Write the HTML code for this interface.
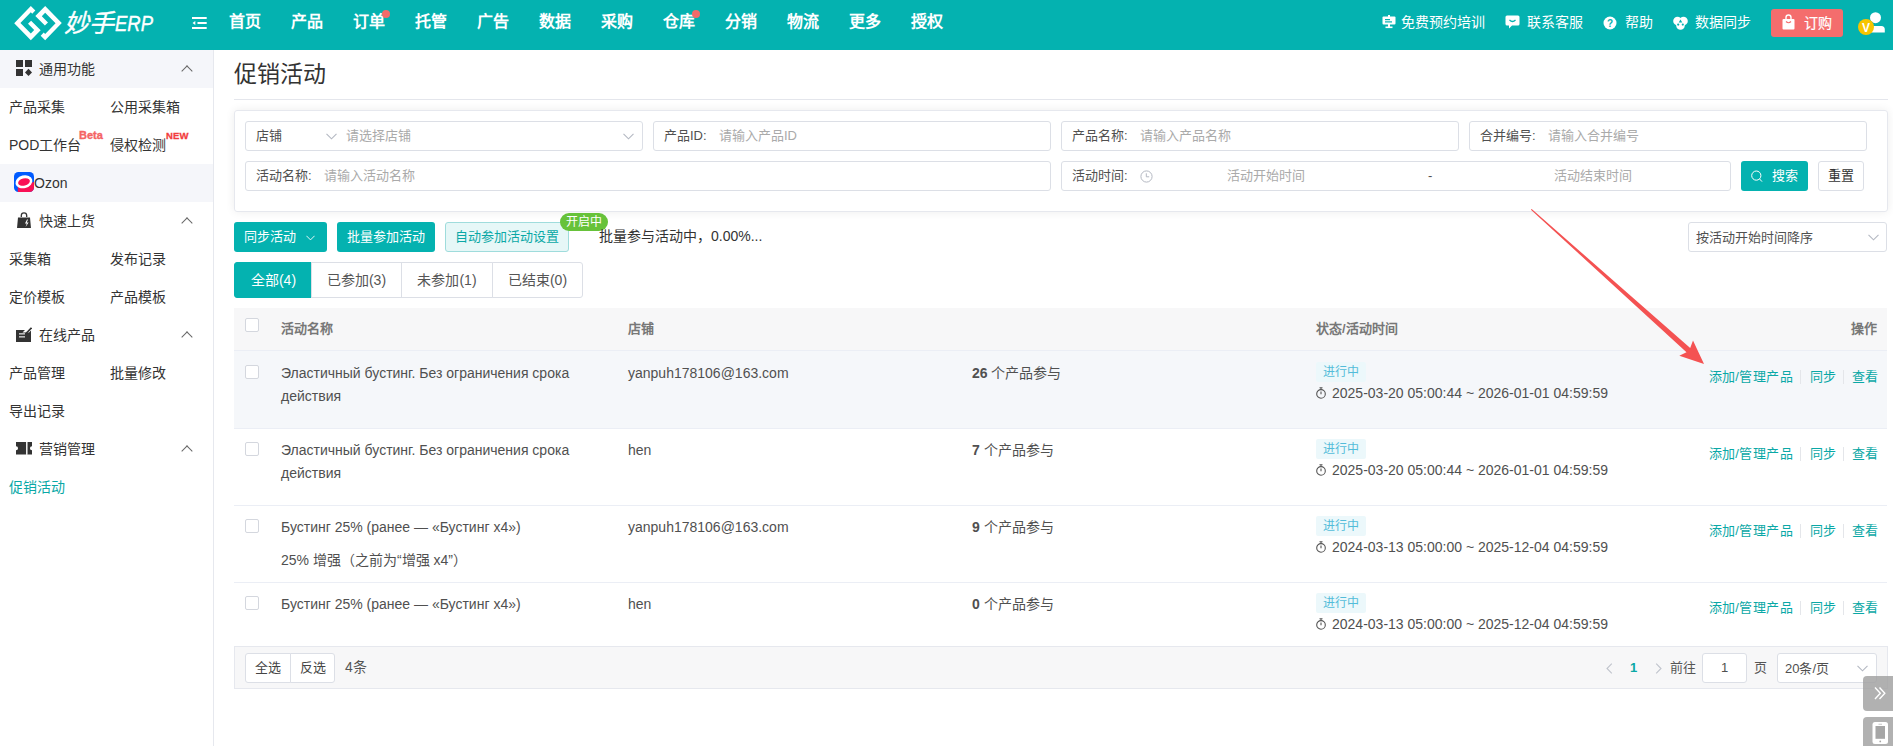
<!DOCTYPE html>
<html lang="zh-CN">
<head>
<meta charset="utf-8">
<style>
*{box-sizing:border-box;margin:0;padding:0}
html,body{width:1893px;height:746px;overflow:hidden;background:#fff;font-family:"Liberation Sans",sans-serif;color:#333;font-size:14px}
.abs{position:absolute}
#hdr{position:absolute;left:0;top:0;width:1893px;height:50px;background:#04b2b0}
.nav{position:absolute;top:11px;font-size:16px;font-weight:700;color:#fff;line-height:22px}
.dot{position:absolute;width:8px;height:8px;border-radius:50%;background:#f46a6a}
.hr{position:absolute;top:13px;font-size:14px;color:#fff;line-height:18px}
#side{position:absolute;left:0;top:50px;width:214px;height:696px;background:#fff;border-right:1px solid #e6e8ee}
.sh{position:absolute;left:0;width:213px;height:38px}
.sh .t{position:absolute;left:39px;top:10px;font-size:14px;color:#333;line-height:18px}
.sh .car{position:absolute;left:183px;top:17px;width:8px;height:8px;border-left:1.3px solid #666;border-top:1.3px solid #666;transform:rotate(45deg)}
.si{position:absolute;font-size:14px;color:#333;line-height:18px;margin-top:1px}
.inp{position:absolute;height:30px;border:1px solid #dcdfe6;border-radius:3px;background:#fff}
.inp .l{position:absolute;left:10px;top:6px;font-size:13px;color:#505050;line-height:16px}
.inp .p{position:absolute;top:6px;font-size:13px;color:#aaa;line-height:16px}
.btn{position:absolute;height:30px;border-radius:3px;font-size:13px;line-height:30px;text-align:center}
.tab{position:absolute;top:262px;height:36px;border:1px solid #dcdfe6;font-size:14px;line-height:34px;text-align:center;color:#555;background:#fff}
.th{position:absolute;top:321px;font-size:13px;font-weight:700;color:#777;line-height:16px}
.cb{position:absolute;width:14px;height:14px;border:1px solid #d4d7de;border-radius:2px;background:#fff}
.row{position:absolute;left:234px;width:1653px;border-bottom:1px solid #ebeef5}
.td{position:absolute;font-size:14px;color:#505050;line-height:23px;margin-top:1px}
.tag{position:absolute;height:20px;width:50px;text-align:center;margin-top:1px;background:#ecf8fb;color:#53bcd9;font-size:12px;line-height:20px;border-radius:2px}
.ops{position:absolute;font-size:13px;color:#0aa8a6;line-height:16px;white-space:nowrap}
.sep{position:absolute;width:1px;height:14px;background:#e4e6ea}
</style>
</head>
<body>
<!-- HEADER -->
<div id="hdr">
  <svg class="abs" style="left:10px;top:3px" width="56" height="42" viewBox="0 0 995 746"><g fill="#fff"><polygon points="370,55 450,135 395,190 370,165 185,355 370,540 430,480 320,370 375,315 545,485 370,660 75,360"/><polygon points="625,660 545,580 600,525 625,550 810,360 625,175 565,235 675,345 620,400 450,230 625,55 920,355"/></g></svg>
  <div class="abs" style="left:64px;top:9px;font-size:25px;font-style:italic;color:#fff;line-height:28px;letter-spacing:-0.5px;-webkit-text-stroke:0.4px #fff">妙手</div><div class="abs" style="left:115px;top:11px;font-size:22.5px;font-style:italic;color:#fff;line-height:26px;transform:scaleX(0.82);transform-origin:0 0;-webkit-text-stroke:0.4px #fff">ERP</div>
  <svg class="abs" style="left:191.5px;top:17px" width="15" height="12" viewBox="0 0 15 12"><g fill="#fff"><rect x="0" y="0" width="14.7" height="2"/><rect x="5.5" y="5" width="9.2" height="2"/><rect x="0" y="10" width="14.7" height="2"/><path d="M0.5 6 L3.3 4.1 L3.3 7.9 Z"/></g></svg>
  <div class="nav" style="left:229px">首页</div>
  <div class="nav" style="left:291px">产品</div>
  <div class="nav" style="left:353px">订单</div><div class="dot" style="left:382px;top:9.5px"></div>
  <div class="nav" style="left:415px">托管</div>
  <div class="nav" style="left:477px">广告</div>
  <div class="nav" style="left:539px">数据</div>
  <div class="nav" style="left:601px">采购</div>
  <div class="nav" style="left:663px">仓库</div><div class="dot" style="left:692px;top:9.5px"></div>
  <div class="nav" style="left:725px">分销</div>
  <div class="nav" style="left:787px">物流</div>
  <div class="nav" style="left:849px">更多</div>
  <div class="nav" style="left:911px">授权</div>

  <svg class="abs" style="left:1382px;top:15px" width="14" height="14" viewBox="0 0 14 14"><g fill="#fff"><rect x="0.5" y="1.5" width="13" height="8" rx="1"/><rect x="6" y="0" width="2" height="2"/><rect x="6" y="9" width="2" height="3"/><rect x="3.5" y="11.5" width="7" height="1.6"/></g><rect x="3" y="4" width="5" height="1.2" fill="#04b2b0"/><rect x="3" y="6.3" width="7" height="1.2" fill="#04b2b0"/></svg>
  <div class="hr" style="left:1401px">免费预约培训</div>
  <svg class="abs" style="left:1504px;top:15px" width="16" height="14" viewBox="0 0 16 14"><path d="M3 0.5 H14 A1.5 1.5 0 0 1 15.5 2 V9 A1.5 1.5 0 0 1 14 10.5 H8 L5 13.5 V10.5 H3 A1.5 1.5 0 0 1 1.5 9 V2 A1.5 1.5 0 0 1 3 0.5Z" fill="#fff"/><path d="M5.5 5 Q8.5 8 11.5 5" stroke="#04b2b0" stroke-width="1.2" fill="none"/></svg>
  <div class="hr" style="left:1527px">联系客服</div>
  <svg class="abs" style="left:1603px;top:16px" width="14" height="14" viewBox="0 0 14 14"><circle cx="7" cy="7" r="6.5" fill="#fff"/><text x="7" y="11" text-anchor="middle" font-size="10" font-weight="700" fill="#04b2b0" font-family="Liberation Sans">?</text></svg>
  <div class="hr" style="left:1625px">帮助</div>
  <svg class="abs" style="left:1673px;top:16px" width="15" height="14" viewBox="0 0 15 14"><g fill="#fff"><circle cx="4.5" cy="5" r="4.3"/><circle cx="10.5" cy="5" r="4.3"/><circle cx="7.5" cy="9.5" r="4.3"/></g><g fill="#04b2b0"><path d="M7.5 3.5 L9.3 6.6 H5.7Z"/><circle cx="5.2" cy="8.6" r="1.1"/><circle cx="9.8" cy="8.6" r="1.1"/></g></svg>
  <div class="hr" style="left:1695px">数据同步</div>
  <div class="abs" style="left:1771px;top:9px;width:72px;height:28px;background:#f46d6d;border-radius:3px"></div>
  <svg class="abs" style="left:1782px;top:14px" width="13" height="16" viewBox="0 0 13 16"><path d="M4 5 V3.5 A2.5 2.5 0 0 1 9 3.5 V5" stroke="#fff" stroke-width="1.4" fill="none"/><rect x="0.5" y="5" width="12" height="10.5" rx="1" fill="#fff"/><path d="M4 7.5 Q6.5 10 9 7.5" stroke="#f46d6d" stroke-width="1.1" fill="none"/></svg>
  <div class="hr" style="left:1804px;top:14px;font-size:14px;-webkit-text-stroke:0.2px #fff">订购</div>
  <svg class="abs" style="left:1857px;top:11px" width="30" height="30" viewBox="0 0 30 30"><circle cx="18.5" cy="6.7" r="5.5" fill="#fff"/><path d="M12.8 21.5 V18.5 A3.5 3.5 0 0 1 16.3 15 H24.3 A3.5 3.5 0 0 1 27.8 18.5 V21.5Z" fill="#fff"/><circle cx="9" cy="16" r="8" fill="#f7c500"/><text x="9" y="20.5" text-anchor="middle" font-size="12" font-weight="700" fill="#fff" font-family="Liberation Sans">V</text></svg>
</div>

<!-- SIDEBAR -->
<div id="side"></div>
<div class="sh" style="top:50px;background:#f5f6fa"><div class="t">通用功能</div><div class="car"></div>
<svg class="abs" style="left:16px;top:10px" width="16" height="16" viewBox="0 0 16 16"><g fill="#333"><rect x="0" y="0" width="7" height="7"/><rect x="9" y="0" width="7" height="7"/><rect x="0" y="9" width="7" height="7"/><path d="M12.5 8.8 L16 12.5 L12.5 16 L9 12.5Z"/></g></svg></div>
<div class="si" style="left:9px;top:97px">产品采集</div>
<div class="si" style="left:110px;top:97px">公用采集箱</div>
<div class="si" style="left:9px;top:135px">POD工作台</div>
<div class="abs" style="left:79px;font-size:11px;font-weight:700;color:#f46464;line-height:12px;-webkit-text-stroke:0.35px #f46464;top:129px">Beta</div>
<div class="si" style="left:110px;top:135px">侵权检测</div>
<div class="abs" style="left:166px;top:131px;font-size:9.5px;font-weight:700;color:#f23d3d;line-height:10px;letter-spacing:0.2px;-webkit-text-stroke:0.3px #f23d3d">NEW</div>
<div class="sh" style="top:164px;background:#f5f6fa"><div class="t" style="left:34px">Ozon</div>
<svg class="abs" style="left:14px;top:8px" width="20" height="20" viewBox="0 0 20 20"><defs><clipPath id="oc"><rect x="0" y="0" width="20" height="20" rx="4.5"/></clipPath></defs><g clip-path="url(#oc)"><rect width="20" height="20" fill="#005bff"/><path d="M3.8 20 V14 L20 10 V20Z" fill="#f91155"/><ellipse cx="9.9" cy="9.8" rx="8.6" ry="6.4" transform="rotate(-14 9.9 9.8)" fill="#fff"/><ellipse cx="10" cy="10" rx="6" ry="3.6" transform="rotate(-14 10 10)" fill="#f91155"/></g></svg></div>
<div class="sh" style="top:202px"><div class="t">快速上货</div><div class="car"></div>
<svg class="abs" style="left:16px;top:9px" width="16" height="18" viewBox="0 0 16 18"><path d="M5.3 6 V4.5 A2.7 2.7 0 0 1 10.7 4.5 V6" stroke="#333" stroke-width="1.3" fill="none"/><path d="M2 6.5 H14 L15 17 H1Z" fill="#333"/><path d="M11 8.5 L9 12.5 H10.8 L9.6 16 L12.6 11.6 H10.8 L12 8.5Z" fill="#fff"/></svg></div>
<div class="si" style="left:9px;top:249px">采集箱</div>
<div class="si" style="left:110px;top:249px">发布记录</div>
<div class="si" style="left:9px;top:287px">定价模板</div>
<div class="si" style="left:110px;top:287px">产品模板</div>
<div class="sh" style="top:316px"><div class="t">在线产品</div><div class="car"></div>
<svg class="abs" style="left:16px;top:10px" width="16" height="17" viewBox="0 0 16 17"><path d="M0 4 H9 L6.5 6.5 L13 6.5 L15 4.5 V16 H0Z" fill="#333"/><rect x="3" y="7.2" width="6" height="1.3" fill="#ddd"/><rect x="3" y="10.2" width="6" height="1.3" fill="#ddd"/><path d="M9.5 8 L15.5 1.8" stroke="#333" stroke-width="1.7"/></svg></div>
<div class="si" style="left:9px;top:363px">产品管理</div>
<div class="si" style="left:110px;top:363px">批量修改</div>
<div class="si" style="left:9px;top:401px">导出记录</div>
<div class="sh" style="top:430px"><div class="t">营销管理</div><div class="car"></div>
<svg class="abs" style="left:16px;top:12px" width="16" height="13" viewBox="0 0 16 13"><path d="M0 0 H10.3 V12.5 H0 V8.3 A2 2 0 0 0 0 4.2Z" fill="#333"/><path d="M11.3 0 H16 V4.2 A2 2 0 0 0 16 8.3 V12.5 H11.3Z" fill="#333"/><g fill="#fff"><rect x="10.3" y="0" width="1" height="12.5"/></g></svg></div>
<div class="si" style="left:9px;top:477px;color:#0aa8a6">促销活动</div>

<!-- MAIN -->
<div class="abs" style="left:234px;top:60px;font-size:23px;color:#333;line-height:28px">促销活动</div>
<div class="abs" style="left:234px;top:99px;width:1654px;height:1px;background:#e4e6ec"></div>

<div class="abs" style="left:234px;top:110px;width:1654px;height:102px;border:1px solid #e6e8ee;border-radius:3px;box-shadow:0 0 10px rgba(0,0,0,0.075)"></div>

<div class="inp" style="left:245px;top:121px;width:398px"><div class="l">店铺</div><svg class="abs" style="left:80px;top:11px" width="11" height="7" viewBox="0 0 11 7"><path d="M0.5 0.8 L5.5 5.8 L10.5 0.8" stroke="#b4b8c2" stroke-width="1.1" fill="none"/></svg><div class="p" style="left:100px">请选择店铺</div><svg class="abs" style="left:377px;top:11px" width="11" height="7" viewBox="0 0 11 7"><path d="M0.5 0.8 L5.5 5.8 L10.5 0.8" stroke="#b4b8c2" stroke-width="1.1" fill="none"/></svg></div>
<div class="inp" style="left:653px;top:121px;width:398px"><div class="l">产品ID:</div><div class="p" style="left:65px">请输入产品ID</div></div>
<div class="inp" style="left:1061px;top:121px;width:398px"><div class="l">产品名称:</div><div class="p" style="left:78px">请输入产品名称</div></div>
<div class="inp" style="left:1469px;top:121px;width:398px"><div class="l">合并编号:</div><div class="p" style="left:78px">请输入合并编号</div></div>
<div class="inp" style="left:245px;top:161px;width:806px"><div class="l">活动名称:</div><div class="p" style="left:78px">请输入活动名称</div></div>
<div class="inp" style="left:1061px;top:161px;width:670px"><div class="l">活动时间:</div><svg class="abs" style="left:78px;top:8px" width="13" height="13" viewBox="0 0 13 13"><circle cx="6.5" cy="6.5" r="5.6" stroke="#b4b8c2" stroke-width="1" fill="none"/><path d="M6.3 3.3 V6.8 H9.2" stroke="#b4b8c2" stroke-width="1" fill="none"/></svg><div class="p" style="left:165px">活动开始时间</div><div class="l" style="left:366px">-</div><div class="p" style="left:492px">活动结束时间</div></div>
<div class="btn" style="left:1741px;top:161px;width:67px;background:#04b2b0;color:#fff;text-align:left;padding-left:31px">搜索</div><svg class="abs" style="left:1751px;top:170px" width="12" height="13" viewBox="0 0 12 13"><circle cx="5.3" cy="5.6" r="4.6" stroke="#fff" stroke-width="1" fill="none"/><path d="M8.6 9 L11 11.6" stroke="#fff" stroke-width="1"/></svg>
<div class="btn" style="left:1818px;top:161px;width:46px;border:1px solid #dcdfe6;color:#333;line-height:28px">重置</div>

<div class="btn" style="left:234px;top:222px;width:93px;background:#04b2b0;color:#fff;text-align:left;padding-left:10px">同步活动</div><svg class="abs" style="left:306px;top:235px" width="9" height="6" viewBox="0 0 11 7"><path d="M0.5 0.8 L5.5 5.8 L10.5 0.8" stroke="#fff" stroke-width="1.1" fill="none"/></svg>
<div class="btn" style="left:337px;top:222px;width:98px;background:#04b2b0;color:#fff">批量参加活动</div>
<div class="btn" style="left:445px;top:222px;width:124px;background:#e6f7f7;border:1px solid #9fdcdc;color:#0aa8a6;line-height:28px">自动参加活动设置</div>
<div class="abs" style="left:560px;top:213px;width:48px;height:18px;border-radius:9px;background:#67c23a;color:#fff;font-size:12px;line-height:18px;text-align:center">开启中</div>
<div class="abs" style="left:599px;top:228px;font-size:14px;color:#333;line-height:16px">批量参与活动中，0.00%...</div>
<div class="inp" style="left:1688px;top:222px;width:199px"><div class="l" style="left:7px;top:7px">按活动开始时间降序</div><svg class="abs" style="left:179px;top:11px" width="11" height="7" viewBox="0 0 11 7"><path d="M0.5 0.8 L5.5 5.8 L10.5 0.8" stroke="#b4b8c2" stroke-width="1.1" fill="none"/></svg></div>

<div class="tab" style="left:234px;width:79px;background:#04b2b0;border-color:#04b2b0;color:#fff;border-radius:3px 0 0 3px">全部(4)</div>
<div class="tab" style="left:311px;width:91px">已参加(3)</div>
<div class="tab" style="left:401px;width:92px">未参加(1)</div>
<div class="tab" style="left:492px;width:91px;border-radius:0 3px 3px 0">已结束(0)</div>

<!-- TABLE -->
<div class="abs" style="left:234px;top:308px;width:1653px;height:43px;background:#f7f7f8;border-bottom:1px solid #ebeef5"></div>
<div class="cb" style="left:245px;top:318px"></div>
<div class="th" style="left:281px">活动名称</div>
<div class="th" style="left:628px">店铺</div>
<div class="th" style="left:1316px">状态/活动时间</div>
<div class="th" style="left:1851px">操作</div>

<div class="row" style="top:351px;height:78px;background:#f5f7fa"></div>
<div class="row" style="top:429px;height:77px"></div>
<div class="row" style="top:506px;height:77px"></div>
<div class="row" style="top:583px;height:64px"></div>

<div class="cb" style="left:245px;top:365px"></div>
<div class="td" style="left:281px;top:361px">Эластичный бустинг. Без ограничения срока<br>действия</div>
<div class="td" style="left:628px;top:361px">yanpuh178106@163.com</div>
<div class="td" style="left:972px;top:361px"><b>26</b> 个产品参与</div>
<div class="tag" style="left:1316px;top:361px">进行中</div>
<div class="td" style="left:1316px;top:381px"><svg style="display:inline-block;vertical-align:-1px;margin-right:6px" width="10" height="12" viewBox="0 0 10 12"><circle cx="5" cy="6.9" r="4.3" stroke="#555" stroke-width="1.1" fill="none"/><path d="M5 4.5 V7.3 M3.5 0.8 H6.5 M5 0.8 V2.6" stroke="#555" stroke-width="1.1" fill="none"/></svg>2025-03-20 05:00:44 ~ 2026-01-01 04:59:59</div>
<div class="ops" style="left:1708.5px;top:369px;letter-spacing:0.4px">添加/管理产品</div><div class="sep" style="left:1800px;top:370px"></div><div class="ops" style="left:1809.5px;top:369px">同步</div><div class="sep" style="left:1843px;top:370px"></div><div class="ops" style="left:1852px;top:369px">查看</div>

<div class="cb" style="left:245px;top:442px"></div>
<div class="td" style="left:281px;top:438px">Эластичный бустинг. Без ограничения срока<br>действия</div>
<div class="td" style="left:628px;top:438px">hen</div>
<div class="td" style="left:972px;top:438px"><b>7</b> 个产品参与</div>
<div class="tag" style="left:1316px;top:438px">进行中</div>
<div class="td" style="left:1316px;top:458px"><svg style="display:inline-block;vertical-align:-1px;margin-right:6px" width="10" height="12" viewBox="0 0 10 12"><circle cx="5" cy="6.9" r="4.3" stroke="#555" stroke-width="1.1" fill="none"/><path d="M5 4.5 V7.3 M3.5 0.8 H6.5 M5 0.8 V2.6" stroke="#555" stroke-width="1.1" fill="none"/></svg>2025-03-20 05:00:44 ~ 2026-01-01 04:59:59</div>
<div class="ops" style="left:1708.5px;top:446px;letter-spacing:0.4px">添加/管理产品</div><div class="sep" style="left:1800px;top:447px"></div><div class="ops" style="left:1809.5px;top:446px">同步</div><div class="sep" style="left:1843px;top:447px"></div><div class="ops" style="left:1852px;top:446px">查看</div>

<div class="cb" style="left:245px;top:519px"></div>
<div class="td" style="left:281px;top:515px">Бустинг 25% (ранее — «Бустинг x4»)</div>
<div class="td" style="left:281px;top:548px">25% 增强（之前为“增强 x4”）</div>
<div class="td" style="left:628px;top:515px">yanpuh178106@163.com</div>
<div class="td" style="left:972px;top:515px"><b>9</b> 个产品参与</div>
<div class="tag" style="left:1316px;top:515px">进行中</div>
<div class="td" style="left:1316px;top:535px"><svg style="display:inline-block;vertical-align:-1px;margin-right:6px" width="10" height="12" viewBox="0 0 10 12"><circle cx="5" cy="6.9" r="4.3" stroke="#555" stroke-width="1.1" fill="none"/><path d="M5 4.5 V7.3 M3.5 0.8 H6.5 M5 0.8 V2.6" stroke="#555" stroke-width="1.1" fill="none"/></svg>2024-03-13 05:00:00 ~ 2025-12-04 04:59:59</div>
<div class="ops" style="left:1708.5px;top:523px;letter-spacing:0.4px">添加/管理产品</div><div class="sep" style="left:1800px;top:524px"></div><div class="ops" style="left:1809.5px;top:523px">同步</div><div class="sep" style="left:1843px;top:524px"></div><div class="ops" style="left:1852px;top:523px">查看</div>

<div class="cb" style="left:245px;top:596px"></div>
<div class="td" style="left:281px;top:592px">Бустинг 25% (ранее — «Бустинг x4»)</div>
<div class="td" style="left:628px;top:592px">hen</div>
<div class="td" style="left:972px;top:592px"><b>0</b> 个产品参与</div>
<div class="tag" style="left:1316px;top:592px">进行中</div>
<div class="td" style="left:1316px;top:612px"><svg style="display:inline-block;vertical-align:-1px;margin-right:6px" width="10" height="12" viewBox="0 0 10 12"><circle cx="5" cy="6.9" r="4.3" stroke="#555" stroke-width="1.1" fill="none"/><path d="M5 4.5 V7.3 M3.5 0.8 H6.5 M5 0.8 V2.6" stroke="#555" stroke-width="1.1" fill="none"/></svg>2024-03-13 05:00:00 ~ 2025-12-04 04:59:59</div>
<div class="ops" style="left:1708.5px;top:600px;letter-spacing:0.4px">添加/管理产品</div><div class="sep" style="left:1800px;top:601px"></div><div class="ops" style="left:1809.5px;top:600px">同步</div><div class="sep" style="left:1843px;top:601px"></div><div class="ops" style="left:1852px;top:600px">查看</div>

<!-- FOOTER -->
<div class="abs" style="left:234px;top:646px;width:1654px;height:43px;background:#f7f7f8;border:1px solid #e6e8ee"></div>
<div class="btn" style="left:245px;top:653px;width:46px;height:30px;border:1px solid #dcdfe6;background:#fff;color:#444;line-height:28px;border-radius:3px 0 0 3px">全选</div>
<div class="btn" style="left:290px;top:653px;width:45px;height:30px;border:1px solid #dcdfe6;background:#fff;color:#444;line-height:28px;border-radius:0 3px 3px 0">反选</div>
<div class="abs" style="left:345px;top:659px;font-size:14px;color:#555;line-height:16px">4条</div>

<svg class="abs" style="left:1606px;top:663px" width="7" height="11" viewBox="0 0 7 11"><path d="M5.8 0.6 L1 5.5 L5.8 10.4" stroke="#c0c4cc" stroke-width="1.1" fill="none"/></svg><svg class="abs" style="left:1655px;top:663px" width="7" height="11" viewBox="0 0 7 11"><path d="M1.2 0.6 L6 5.5 L1.2 10.4" stroke="#c0c4cc" stroke-width="1.1" fill="none"/></svg><div class="abs" style="left:1630px;top:660px;font-size:13px;font-weight:700;color:#0aa8a6;line-height:16px">1</div>
<div class="abs" style="left:1670px;top:660px;font-size:13px;color:#555;line-height:16px">前往</div>
<div class="inp" style="left:1702px;top:653px;width:45px;height:30px"><div class="l" style="left:18px;top:6px">1</div></div>
<div class="abs" style="left:1754px;top:660px;font-size:13px;color:#555;line-height:16px">页</div>
<div class="inp" style="left:1777px;top:653px;width:100px;height:30px"><div class="l" style="left:7px;top:7px">20条/页</div><svg class="abs" style="left:79px;top:11px" width="11" height="7" viewBox="0 0 11 7"><path d="M0.5 0.8 L5.5 5.8 L10.5 0.8" stroke="#b4b8c2" stroke-width="1.1" fill="none"/></svg></div>

<div class="abs" style="left:1863px;top:676px;width:30px;height:35px;background:rgba(160,160,160,0.82);border-radius:4px 0 0 4px"></div>
<div class="abs" style="left:1863px;top:717px;width:30px;height:29px;background:rgba(160,160,160,0.82);border-radius:4px 0 0 0"></div>

<svg class="abs" style="left:0;top:0" width="1893" height="746"><polygon points="1530.9,209.8 1686.5,352.2 1679.3,355.8 1704.0,364.1 1693.0,340.4 1690.2,348.0 1531.7,209.0" fill="#f45252"/></svg>
<svg class="abs" style="left:1874px;top:687px" width="13" height="13" viewBox="0 0 13 13"><path d="M1 0.5 L6.3 6.3 L1 12 M5.5 0.5 L10.8 6.3 L5.5 12" stroke="#fff" stroke-width="1.4" fill="none"/></svg>
<svg class="abs" style="left:1872px;top:722px" width="17" height="23" viewBox="0 0 17 23"><rect x="0.5" y="0" width="15.5" height="22" rx="2.5" fill="#fff"/><rect x="3.5" y="4" width="9.5" height="12.8" fill="#a6a6a6"/><rect x="6.5" y="1.8" width="3.5" height="0.8" fill="#bbb"/><circle cx="8.25" cy="19.4" r="0.9" fill="#a6a6a6"/></svg>
</body>
</html>
